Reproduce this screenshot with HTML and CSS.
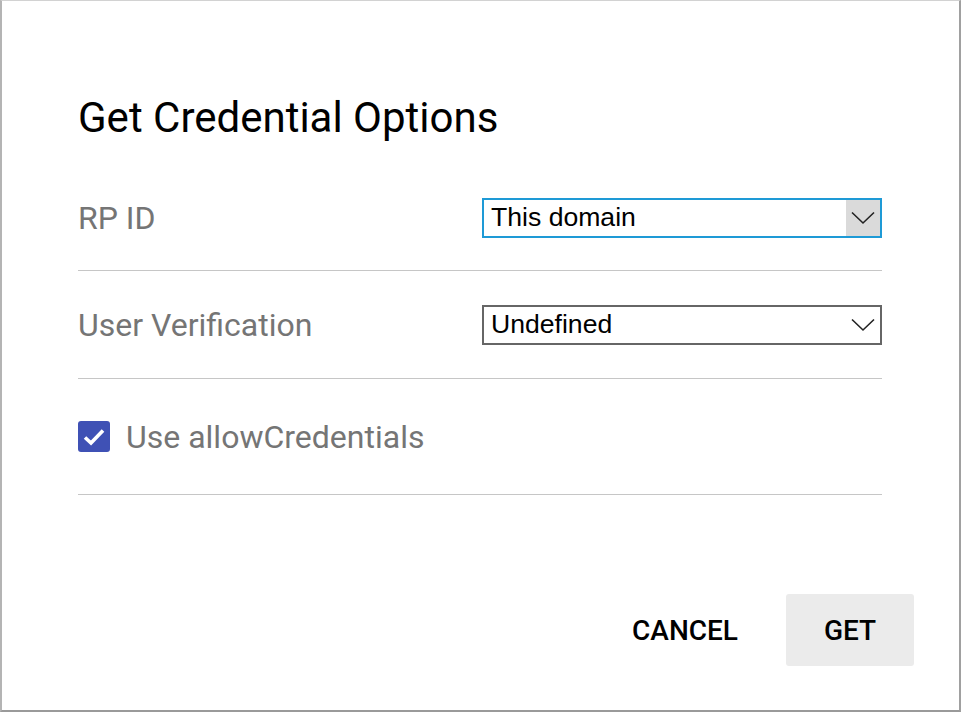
FILE: index.html
```html
<!DOCTYPE html>
<html>
<head>
<meta charset="utf-8">
<link rel="stylesheet" href="styles.css">
</head>
<body>
<div class="dialog">
  <h1 class="title">Get Credential Options</h1>
  <div class="field field-rp">
    <span class="label">RP ID</span>
    <div class="select focused">
      <span class="value">This domain</span>
      <span class="arrow"><svg width="24" height="14" viewBox="0 0 24 14"><path d="M1 1.5 L12 12 L23 1.5" fill="none" stroke="#222" stroke-width="1.6"/></svg></span>
    </div>
  </div>
  <div class="field field-uv">
    <span class="label">User Verification</span>
    <div class="select">
      <span class="value">Undefined</span>
      <span class="arrow"><svg width="24" height="14" viewBox="0 0 24 14"><path d="M1 1.5 L12 12 L23 1.5" fill="none" stroke="#222" stroke-width="1.6"/></svg></span>
    </div>
  </div>
  <div class="field field-check">
    <span class="checkbox"><svg width="22" height="18" viewBox="0 0 22 18"><path d="M2 9.5 L8 15 L20 2.5" fill="none" stroke="#fff" stroke-width="3.6"/></svg></span>
    <span class="label">Use allowCredentials</span>
  </div>
  <div class="actions">
    <button class="btn">CANCEL</button>
    <button class="btn btn-filled">GET</button>
  </div>
</div>
</body>
</html>
```
FILE: styles.css
```css
html, body {
  margin: 0;
  padding: 0;
  background: #fff;
}
.dialog {
  box-sizing: border-box;
  width: 961px;
  height: 712px;
  border-top: 1px solid #d2d2d2;
  border-left: 2px solid #b4b4b4;
  border-right: 2px solid #a0a0a0;
  border-bottom: 2px solid #9a9a9a;
  padding: 0 0 0 76px;
  font-family: Roboto, "Liberation Sans", sans-serif;
  display: flex;
  flex-direction: column;
}
.title {
  margin: 93px 0 23px 0;
  font-size: 42px;
  font-weight: 400;
  line-height: 48px;
  color: #000;
}
.field {
  flex: none;
  width: 804px;
  display: flex;
  align-items: center;
  justify-content: space-between;
  border-bottom: 1px solid #c6c6c6;
  box-sizing: border-box;
}
.field-rp {
  height: 106px;
}
.field-uv {
  height: 108px;
}
.field-check {
  justify-content: flex-start;
  height: 116px;
  gap: 16px;
}
.label {
  font-size: 32px;
  color: #757575;
}
.select {
  box-sizing: border-box;
  width: 400px;
  height: 40px;
  border: 2px solid #666;
  display: flex;
  align-items: center;
  justify-content: space-between;
  font-family: "Liberation Sans", Arial, sans-serif;
  font-size: 26.6px;
  color: #000;
}
.select.focused {
  border-color: #1e9ad6;
}
.value {
  padding-left: 7px;
}
.arrow {
  width: 34px;
  height: 36px;
  display: flex;
  align-items: center;
  justify-content: center;
}
.focused .arrow {
  background: #dadada;
}
.checkbox {
  width: 32px;
  height: 31px;
  border-radius: 3px;
  background: #3f51b5;
  display: flex;
  align-items: center;
  justify-content: center;
}
.actions {
  display: flex;
  justify-content: flex-end;
  align-items: center;
  margin-top: 99px;
  padding-right: 45px;
  gap: 32px;
}
.btn {
  font-family: Roboto, "Liberation Sans", sans-serif;
  font-size: 28px;
  font-weight: 500;
  color: #000;
  background: transparent;
  border: none;
  border-radius: 3px;
  height: 72px;
  padding: 0 16px;
  cursor: pointer;
}
.btn-filled {
  background: #ebebeb;
  width: 128px;
}
```
